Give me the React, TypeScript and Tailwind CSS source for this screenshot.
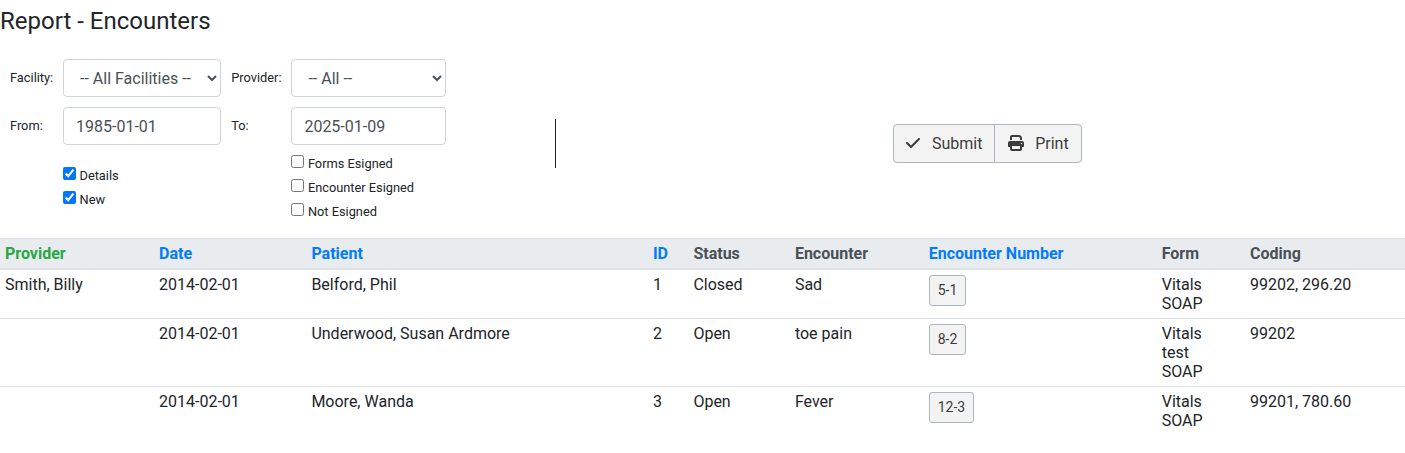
import React from 'react';
import { FaCheck, FaPrint } from 'react-icons/fa6';

type Row = {
  provider: string;
  date: string;
  patient: string;
  id: string;
  status: string;
  encounter: string;
  number: string;
  forms: string[];
  coding: string;
};

const rows: Row[] = [
  { provider: 'Smith, Billy', date: '2014-02-01', patient: 'Belford, Phil', id: '1', status: 'Closed', encounter: 'Sad', number: '5-1', forms: ['Vitals', 'SOAP'], coding: '99202, 296.20' },
  { provider: '', date: '2014-02-01', patient: 'Underwood, Susan Ardmore', id: '2', status: 'Open', encounter: 'toe pain', number: '8-2', forms: ['Vitals', 'test', 'SOAP'], coding: '99202' },
  { provider: '', date: '2014-02-01', patient: 'Moore, Wanda', id: '3', status: 'Open', encounter: 'Fever', number: '12-3', forms: ['Vitals', 'SOAP'], coding: '99201, 780.60' },
];

const columns = [
  { label: 'Provider', color: 'text-[#28a745]' },
  { label: 'Date', color: 'text-[#007bff]' },
  { label: 'Patient', color: 'text-[#007bff]' },
  { label: 'ID', color: 'text-[#007bff]' },
  { label: 'Status', color: 'text-[#495057]' },
  { label: 'Encounter', color: 'text-[#495057]' },
  { label: 'Encounter Number', color: 'text-[#007bff]' },
  { label: 'Form', color: 'text-[#495057]' },
  { label: 'Coding', color: 'text-[#495057]' },
];

const grid = 'grid grid-cols-[154px_152.4px_341.5px_40.5px_101.5px_133.8px_233px_88.3px_1fr] leading-[19px]';

const control =
  'h-[38px] w-full rounded-[4px] border border-[#ced4da] bg-white px-3 py-1.5 text-base leading-6 text-[#495057]';

function Check({ label, checked = false }: { label: string; checked?: boolean }) {
  return (
    <label className="flex h-6 items-start">
      <input type="checkbox" defaultChecked={checked} className="m-0 mt-[3px] size-[13px]" />
      <span className="ml-[3.5px] mt-[2px] leading-[19px]">{label}</span>
    </label>
  );
}

export default function App() {
  return (
    <div className="h-[453px] w-full overflow-hidden bg-white font-[Roboto,sans-serif] text-base text-[#212529]">
      <h1 className="h-[59px] pt-[7px] text-2xl leading-[29px] font-normal">Report - Encounters</h1>

      <div className="flex h-[179px]">
        <div className="flex w-[555px] text-[12.8px]">
          <div className="grid h-fit grid-cols-[53px_158px_70.4px_154.6px] gap-y-[10px] pl-[10px]">
            <div className="pt-[9px] leading-5">Facility:</div>
            <select className={control}>
              <option>-- All Facilities --</option>
            </select>
            <div className="pt-[9px] pl-[10.3px] leading-5">Provider:</div>
            <select className={control}>
              <option>-- All --</option>
            </select>

            <div className="pt-[9px] leading-5">From:</div>
            <input className={control} defaultValue="1985-01-01" />
            <div className="pt-[9px] pl-[10.3px] leading-5">To:</div>
            <input className={control} defaultValue="2025-01-09" />

            <div />
            <div className="pt-[9px]">
              <Check label="Details" checked />
              <Check label="New" checked />
            </div>
            <div />
            <div className="-mt-[3px]">
              <Check label="Forms Esigned" />
              <Check label="Encounter Esigned" />
              <Check label="Not Esigned" />
            </div>
          </div>
        </div>
        <div className="mt-[60px] h-[49px] w-px bg-[#212529]" />
        <div className="ml-[337px] mt-[65px] flex h-[39px] w-[189px] overflow-hidden rounded-[4px] border border-[#adb5bd] bg-[#f3f3f3] text-[#3c3c3c]">
          <button className="flex w-[101px] items-center border-r border-[#adb5bd] pl-3">
            <FaCheck className="-mt-px h-4 w-[14px]" />
            <span className="ml-3">Submit</span>
          </button>
          <button className="flex items-center pl-[12.6px]">
            <FaPrint className="-mt-px size-4" />
            <span className="ml-[11.6px]">Print</span>
          </button>
        </div>
      </div>

      <div className={`${grid} h-8 border-t border-b-2 border-t-[#dee2e6] border-b-[#dee2e6] bg-[#e9ecef] font-bold`}>
        {columns.map((c) => (
          <div key={c.label} className={`px-[5px] pt-[5px] ${c.color}`}>
            {c.label}
          </div>
        ))}
      </div>
      {rows.map((r, i) => (
        <div key={r.id} className={`${grid} *:px-[5px] *:py-[5px] ${i > 0 ? 'border-t border-[#dee2e6]' : ''}`}>
          <div>{r.provider}</div>
          <div>{r.date}</div>
          <div>{r.patient}</div>
          <div>{r.id}</div>
          <div>{r.status}</div>
          <div>{r.encounter}</div>
          <div className="flex items-start">
            <button className="h-[31px] rounded-[3px] border border-[#adb5bd] bg-[#f3f3f3] px-2 text-sm leading-[21px] text-[#3c3c3c]">
              {r.number}
            </button>
          </div>
          <div>
            {r.forms.map((f) => (
              <div key={f}>{f}</div>
            ))}
          </div>
          <div>{r.coding}</div>
        </div>
      ))}
    </div>
  );
}
